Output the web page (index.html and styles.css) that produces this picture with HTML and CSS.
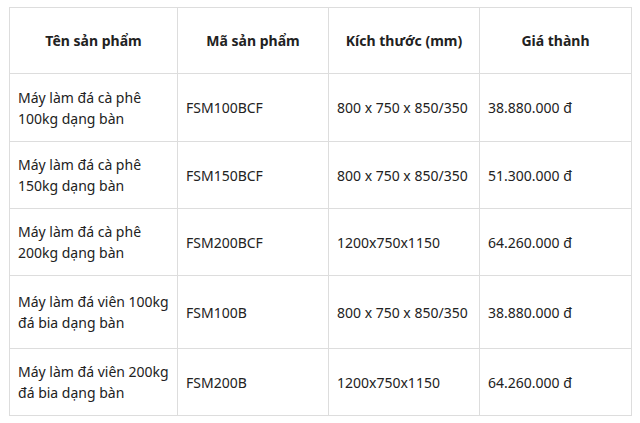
FILE: index.html
```html
<!DOCTYPE html>
<html lang="vi">
<head>
<meta charset="utf-8">
<link rel="stylesheet" href="styles.css">
</head>
<body>
<table class="spec">
  <colgroup>
    <col class="c1"><col class="c2"><col class="c3"><col class="c4">
  </colgroup>
  <thead>
    <tr class="head">
      <th>Tên sản phẩm</th>
      <th>Mã sản phẩm</th>
      <th>Kích thước (mm)</th>
      <th>Giá thành</th>
    </tr>
  </thead>
  <tbody>
    <tr class="row first">
      <td>Máy làm đá cà phê 100kg dạng bàn</td>
      <td>FSM100BCF</td>
      <td>800 x 750 x 850/350</td>
      <td>38.880.000 đ</td>
    </tr>
    <tr class="row">
      <td>Máy làm đá cà phê 150kg dạng bàn</td>
      <td>FSM150BCF</td>
      <td>800 x 750 x 850/350</td>
      <td>51.300.000 đ</td>
    </tr>
    <tr class="row">
      <td>Máy làm đá cà phê 200kg dạng bàn</td>
      <td>FSM200BCF</td>
      <td>1200x750x1150</td>
      <td>64.260.000 đ</td>
    </tr>
    <tr class="row tall">
      <td>Máy làm đá viên 100kg đá bia dạng bàn</td>
      <td>FSM100B</td>
      <td>800 x 750 x 850/350</td>
      <td>38.880.000 đ</td>
    </tr>
    <tr class="row">
      <td>Máy làm đá viên 200kg đá bia dạng bàn</td>
      <td>FSM200B</td>
      <td>1200x750x1150</td>
      <td>64.260.000 đ</td>
    </tr>
  </tbody>
</table>
</body>
</html>
```

FILE: styles.css
```css
html, body {
  margin: 0;
  padding: 0;
  background: #fff;
}
body {
  font-family: "Noto Sans", "Open Sans", sans-serif;
  font-size: 14px;
  line-height: 21px;
  color: #222;
  padding: 7px 0 0 9px;
}
.spec {
  border-collapse: collapse;
  table-layout: fixed;
  width: 622px;
}
.c1 { width: 168px; }
.c2 { width: 151px; }
.c3 { width: 151px; }
.c4 { width: 152px; }
.spec th,
.spec td {
  border: 1px solid #ddd;
  padding: 0 8px;
  vertical-align: middle;
}
.spec th {
  font-weight: 700;
  text-align: center;
}
.spec td {
  text-align: left;
}
.head { height: 66px; }
.row { height: 67px; }
.row.first { height: 68px; }
.row.tall { height: 73px; }
```
